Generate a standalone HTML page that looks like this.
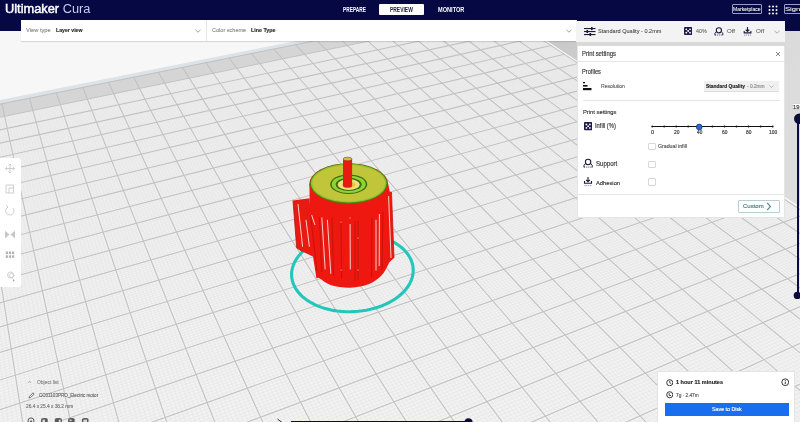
<!DOCTYPE html>
<html><head><meta charset="utf-8">
<style>
*{margin:0;padding:0;box-sizing:border-box}
html,body{width:800px;height:422px;overflow:hidden;background:#f7f7f7;font-family:"Liberation Sans",sans-serif}
#scene{position:absolute;left:0;top:0;filter:blur(0.35px)}
.a{position:absolute;white-space:nowrap}
.t{position:absolute;white-space:nowrap;line-height:1;transform-origin:0 0;font-family:"Liberation Sans",sans-serif;-webkit-text-stroke:0.15px currentColor}
#logo{position:absolute;white-space:nowrap;line-height:1;transform-origin:0 0;left:5.4px;top:2.9px;font-size:12.5px;color:#fff;transform:scaleX(1.025)}
#hdr{position:absolute;left:0;top:0;width:800px;height:30.8px;background:#060843}
#logo b{font-weight:normal;-webkit-text-stroke:0.45px #fff}
#logo span{color:#c9cbf0;font-weight:normal}
.tab{top:5px;font-size:6px;color:#fff;letter-spacing:0.1px}
#pv{left:379px;top:3.5px;width:45px;height:11.5px;background:#fff;border-radius:1px}
#stage{left:21px;top:20px;width:556px;height:21px;background:#fff;box-shadow:0 1px 1px rgba(0,0,0,0.12)}
.lbl{font-size:6.5px;color:#9a9a9a}
.val{font-size:6.5px;color:#303030}
#psbar{left:576px;top:20.5px;width:208.5px;height:21px;background:#f3f3f3}
#panel{left:577px;top:45.5px;width:207.5px;height:172.5px;background:#fff;border:1px solid #e4e4e4;border-top:none}
#pshadow{left:577px;top:41.5px;width:208px;height:4px;background:#d9d9d9}
.pt{font-size:6.7px;color:#303030}
.sm{font-size:5.7px;color:#505050}
.cb{width:7.5px;height:7.5px;border:1px solid #d8d8d8;background:#fff;border-radius:1px}
#toolbar{left:0;top:158px;width:21px;height:129.3px;background:#fff;border-radius:0 3px 3px 0}
#info{left:656.8px;top:370.7px;width:138.5px;height:52px;background:#fff;border:1px solid #e4e4e4;border-bottom:none}
#save{left:665px;top:402.8px;width:124px;height:13.2px;background:#196ef0;color:#fff;font-size:6.3px;text-align:center;line-height:13.2px}
</style></head><body>
<svg id="scene" width="800" height="422" viewBox="0 0 800 422">
<rect width="800" height="422" fill="#f7f7f7"/>
<polygon points="-84.4,134.7 502.4,13.5 1157.7,445.1 -42.5,1245.6" fill="#f2f2f2"/>
<defs><linearGradient id="rg" gradientUnits="userSpaceOnUse" x1="555" y1="45" x2="795" y2="90"><stop offset="0" stop-color="#c9c9c9"/><stop offset="1" stop-color="#dcdcdc"/></linearGradient></defs>
<polygon points="488.6,2.6 757.8,-51.1 1480.6,229.7 1160.6,443.1" fill="url(#rg)"/>
<polygon points="-84.9,121.2 490.3,5.5 502.4,13.5 -84.4,134.7" fill="#d5d5d5"/>
<polygon points="-85.0,117.0 757.8,-51.1 762.5,-49.3 -84.9,121.2" fill="#dde2e6"/>
<path d="M-81.3 134.1L-33.0 1239.3M-78.2 133.5L-23.6 1233.0M-75.2 132.8L-14.4 1226.8M-72.1 132.2L-5.1 1220.7M-69.1 131.6L4.0 1214.6M-66.0 130.9L13.1 1208.5M-63.0 130.3L22.1 1202.5M-60.0 129.7L31.1 1196.5M-57.0 129.1L40.0 1190.6M-51.0 127.8L57.5 1178.9M-48.0 127.2L66.2 1173.1M-45.0 126.6L74.8 1167.4M-42.0 126.0L83.4 1161.7M-39.1 125.4L91.9 1156.0M-36.1 124.8L100.3 1150.4M-33.1 124.1L108.7 1144.8M-30.2 123.5L117.0 1139.2M-27.3 122.9L125.2 1133.7M-21.4 121.7L141.5 1122.9M-18.5 121.1L149.6 1117.5M-15.6 120.5L157.6 1112.1M-12.7 119.9L165.6 1106.8M-9.8 119.3L173.5 1101.6M-6.9 118.7L181.3 1096.3M-4.0 118.1L189.1 1091.1M-1.1 117.5L196.8 1086.0M1.8 116.9L204.5 1080.9M7.5 115.8L219.7 1070.7M10.3 115.2L227.2 1065.7M13.2 114.6L234.7 1060.7M16.0 114.0L242.1 1055.8M18.8 113.4L249.5 1050.9M21.7 112.8L256.8 1046.0M24.5 112.2L264.0 1041.1M27.3 111.7L271.3 1036.3M30.1 111.1L278.4 1031.6M35.7 109.9L292.6 1022.1M38.4 109.4L299.6 1017.4M41.2 108.8L306.6 1012.8M44.0 108.2L313.5 1008.1M46.8 107.6L320.4 1003.5M49.5 107.1L327.3 999.0M52.3 106.5L334.1 994.5M55.0 105.9L340.8 989.9M57.7 105.4L347.5 985.5M63.2 104.2L360.8 976.6M65.9 103.7L367.4 972.2M68.6 103.1L373.9 967.9M71.3 102.6L380.4 963.6M74.0 102.0L386.8 959.2M76.7 101.4L393.2 955.0M79.4 100.9L399.6 950.7M82.1 100.3L405.9 946.5M84.8 99.8L412.2 942.3M90.1 98.7L424.7 934.0M92.7 98.1L430.8 929.9M95.4 97.6L437.0 925.8M98.0 97.0L443.1 921.7M100.7 96.5L449.1 917.7M103.3 96.0L455.1 913.7M105.9 95.4L461.1 909.7M108.5 94.9L467.0 905.7M111.2 94.3L472.9 901.8M116.4 93.3L484.6 894.0M119.0 92.7L490.4 890.1M121.5 92.2L496.2 886.3M124.1 91.6L501.9 882.5M126.7 91.1L507.6 878.7M129.3 90.6L513.3 874.9M131.8 90.1L518.9 871.2M134.4 89.5L524.5 867.4M137.0 89.0L530.1 863.7M142.0 87.9L541.1 856.4M144.6 87.4L546.5 852.7M147.1 86.9L552.0 849.1M149.6 86.4L557.4 845.5M152.2 85.9L562.7 841.9M154.7 85.3L568.0 838.4M157.2 84.8L573.3 834.8M159.7 84.3L578.6 831.3M162.2 83.8L583.9 827.8M167.2 82.8L594.2 820.9M169.6 82.2L599.4 817.5M172.1 81.7L604.5 814.0M174.6 81.2L609.6 810.7M177.0 80.7L614.7 807.3M179.5 80.2L619.7 803.9M181.9 79.7L624.7 800.6M184.4 79.2L629.7 797.3M186.8 78.7L634.6 794.0M191.7 77.7L644.5 787.4M194.1 77.2L649.3 784.2M196.6 76.7L654.2 780.9M199.0 76.2L659.0 777.7M201.4 75.7L663.8 774.5M203.8 75.2L668.5 771.4M206.2 74.7L673.3 768.2M208.6 74.2L678.0 765.1M211.0 73.7L682.6 761.9M215.7 72.7L691.9 755.7M218.1 72.2L696.5 752.7M220.5 71.7L701.1 749.6M222.8 71.3L705.7 746.6M225.2 70.8L710.2 743.6M227.5 70.3L714.7 740.6M229.9 69.8L719.2 737.6M232.2 69.3L723.6 734.6M234.6 68.8L728.1 731.6M239.2 67.9L736.9 725.8M241.5 67.4L741.3 722.8M243.9 66.9L745.6 720.0M246.2 66.4L749.9 717.1M248.5 66.0L754.2 714.2M250.8 65.5L758.5 711.4M253.1 65.0L762.7 708.5M255.4 64.5L767.0 705.7M257.7 64.1L771.2 702.9M262.2 63.1L779.5 697.3M264.5 62.6L783.7 694.6M266.8 62.2L787.8 691.8M269.0 61.7L791.9 689.1M271.3 61.2L796.0 686.4M273.5 60.8L800.0 683.6M275.8 60.3L804.1 680.9M278.0 59.8L808.1 678.3M280.3 59.4L812.1 675.6M284.7 58.5L820.0 670.3M287.0 58.0L824.0 667.7M289.2 57.5L827.9 665.1M291.4 57.1L831.8 662.5M293.6 56.6L835.6 659.9M295.8 56.2L839.5 657.3M298.0 55.7L843.3 654.7M300.2 55.3L847.2 652.2M302.4 54.8L851.0 649.7M306.8 53.9L858.5 644.6M308.9 53.5L862.3 642.1M311.1 53.0L866.0 639.6M313.3 52.6L869.7 637.2M315.5 52.1L873.4 634.7M317.6 51.7L877.1 632.3M319.8 51.2L880.7 629.8M321.9 50.8L884.4 627.4M324.1 50.3L888.0 625.0M328.3 49.4L895.2 620.2M330.5 49.0L898.8 617.8M332.6 48.6L902.3 615.4M334.7 48.1L905.8 613.1M336.9 47.7L909.4 610.7M339.0 47.3L912.9 608.4M341.1 46.8L916.3 606.1M343.2 46.4L919.8 603.7M345.3 45.9L923.3 601.4M349.5 45.1L930.1 596.9M351.6 44.6L933.5 594.6M353.7 44.2L936.9 592.3M355.7 43.8L940.3 590.1M357.8 43.4L943.7 587.8M359.9 42.9L947.0 585.6M362.0 42.5L950.3 583.4M364.0 42.1L953.6 581.2M366.1 41.6L956.9 579.0M370.2 40.8L963.5 574.6M372.2 40.4L966.7 572.5M374.3 40.0L970.0 570.3M376.3 39.5L973.2 568.1M378.4 39.1L976.4 566.0M380.4 38.7L979.6 563.9M382.4 38.3L982.8 561.8M384.4 37.9L985.9 559.6M386.5 37.4L989.1 557.5M390.5 36.6L995.3 553.4M392.5 36.2L998.4 551.3M394.5 35.8L1001.5 549.2M396.5 35.4L1004.6 547.2M398.5 35.0L1007.7 545.1M400.5 34.5L1010.7 543.1M402.5 34.1L1013.8 541.1M404.5 33.7L1016.8 539.0M406.4 33.3L1019.8 537.0M410.4 32.5L1025.8 533.0M412.3 32.1L1028.8 531.1M414.3 31.7L1031.7 529.1M416.3 31.3L1034.7 527.1M418.2 30.9L1037.6 525.2M420.2 30.5L1040.5 523.2M422.1 30.1L1043.5 521.3M424.1 29.7L1046.4 519.3M426.0 29.3L1049.2 517.4M429.9 28.5L1055.0 513.6M431.8 28.1L1057.8 511.7M433.7 27.7L1060.7 509.8M435.6 27.3L1063.5 507.9M437.6 26.9L1066.3 506.0M439.5 26.5L1069.1 504.2M441.4 26.1L1071.9 502.3M443.3 25.7L1074.7 500.5M445.2 25.3L1077.4 498.6M449.0 24.5L1082.9 495.0M450.9 24.1L1085.6 493.1M452.8 23.7L1088.4 491.3M454.7 23.3L1091.1 489.5M456.5 23.0L1093.8 487.7M458.4 22.6L1096.4 485.9M460.3 22.2L1099.1 484.1M462.2 21.8L1101.8 482.4M464.0 21.4L1104.4 480.6M467.7 20.6L1109.7 477.1M469.6 20.3L1112.3 475.3M471.4 19.9L1114.9 473.6M473.3 19.5L1117.5 471.9M475.1 19.1L1120.1 470.1M477.0 18.7L1122.7 468.4M478.8 18.4L1125.3 466.7M480.6 18.0L1127.8 465.0M482.5 17.6L1130.4 463.3M486.1 16.8L1135.4 459.9M487.9 16.5L1137.9 458.3M489.8 16.1L1140.4 456.6M491.6 15.7L1142.9 454.9M493.4 15.3L1145.4 453.3M495.2 15.0L1147.9 451.6M497.0 14.6L1150.4 450.0M498.8 14.2L1152.8 448.3M500.6 13.9L1155.3 446.7M-84.3 136.0L503.5 14.2M-84.3 137.3L504.6 15.0M-84.2 138.6L505.8 15.7M-84.2 139.8L506.9 16.5M-84.1 141.1L508.1 17.2M-84.1 142.4L509.2 18.0M-84.0 143.7L510.4 18.7M-84.0 145.1L511.5 19.5M-83.9 146.4L512.7 20.3M-83.8 149.0L515.0 21.8M-83.8 150.4L516.2 22.6M-83.7 151.7L517.4 23.3M-83.7 153.1L518.5 24.1M-83.6 154.4L519.7 24.9M-83.6 155.8L520.9 25.7M-83.5 157.2L522.1 26.5M-83.5 158.6L523.3 27.3M-83.4 160.0L524.5 28.1M-83.3 162.7L527.0 29.7M-83.3 164.2L528.2 30.5M-83.2 165.6L529.4 31.3M-83.1 167.0L530.6 32.1M-83.1 168.4L531.9 32.9M-83.0 169.9L533.1 33.7M-83.0 171.3L534.3 34.5M-82.9 172.8L535.6 35.4M-82.9 174.2L536.9 36.2M-82.8 177.2L539.4 37.8M-82.7 178.7L540.6 38.7M-82.7 180.2L541.9 39.5M-82.6 181.7L543.2 40.4M-82.5 183.2L544.5 41.2M-82.5 184.7L545.8 42.1M-82.4 186.2L547.1 42.9M-82.4 187.7L548.4 43.8M-82.3 189.3L549.7 44.6M-82.2 192.4L552.3 46.4M-82.1 194.0L553.6 47.2M-82.1 195.5L554.9 48.1M-82.0 197.1L556.3 49.0M-82.0 198.7L557.6 49.9M-81.9 200.3L558.9 50.7M-81.8 201.9L560.3 51.6M-81.8 203.5L561.6 52.5M-81.7 205.2L563.0 53.4M-81.6 208.4L565.7 55.2M-81.5 210.1L567.1 56.1M-81.5 211.8L568.5 57.0M-81.4 213.4L569.9 57.9M-81.3 215.1L571.3 58.9M-81.3 216.8L572.7 59.8M-81.2 218.5L574.1 60.7M-81.1 220.2L575.5 61.6M-81.1 221.9L576.9 62.6M-80.9 225.4L579.7 64.4M-80.9 227.2L581.2 65.4M-80.8 228.9L582.6 66.3M-80.7 230.7L584.1 67.3M-80.7 232.5L585.5 68.2M-80.6 234.3L587.0 69.2M-80.5 236.1L588.4 70.2M-80.5 237.9L589.9 71.1M-80.4 239.7L591.4 72.1M-80.3 243.4L594.4 74.1M-80.2 245.2L595.8 75.0M-80.1 247.1L597.4 76.0M-80.1 249.0L598.9 77.0M-80.0 250.9L600.4 78.0M-79.9 252.8L601.9 79.0M-79.8 254.7L603.4 80.0M-79.8 256.6L605.0 81.0M-79.7 258.5L606.5 82.1M-79.5 262.4L609.6 84.1M-79.5 264.4L611.2 85.1M-79.4 266.4L612.7 86.2M-79.3 268.4L614.3 87.2M-79.2 270.4L615.9 88.2M-79.2 272.4L617.5 89.3M-79.1 274.4L619.1 90.3M-79.0 276.5L620.7 91.4M-78.9 278.5L622.3 92.4M-78.8 282.7L625.5 94.6M-78.7 284.8L627.2 95.7M-78.6 286.9L628.8 96.7M-78.5 289.0L630.4 97.8M-78.5 291.1L632.1 98.9M-78.4 293.3L633.8 100.0M-78.3 295.4L635.4 101.1M-78.2 297.6L637.1 102.2M-78.1 299.8L638.8 103.3M-78.0 304.2L642.2 105.6M-77.9 306.5L643.9 106.7M-77.8 308.7L645.6 107.8M-77.7 311.0L647.3 108.9M-77.6 313.2L649.1 110.1M-77.5 315.5L650.8 111.2M-77.5 317.8L652.5 112.4M-77.4 320.2L654.3 113.5M-77.3 322.5L656.1 114.7M-77.1 327.2L659.6 117.0M-77.0 329.6L661.4 118.2M-76.9 332.0L663.2 119.4M-76.8 334.4L665.0 120.6M-76.7 336.8L666.8 121.8M-76.6 339.3L668.6 123.0M-76.6 341.8L670.5 124.2M-76.5 344.2L672.3 125.4M-76.4 346.7L674.2 126.6M-76.2 351.8L677.9 129.1M-76.1 354.3L679.7 130.3M-76.0 356.9L681.6 131.5M-75.9 359.5L683.5 132.8M-75.8 362.1L685.4 134.0M-75.7 364.7L687.3 135.3M-75.6 367.4L689.3 136.6M-75.5 370.0L691.2 137.8M-75.4 372.7L693.1 139.1M-75.2 378.1L697.0 141.7M-75.1 380.8L699.0 143.0M-75.0 383.6L701.0 144.3M-74.9 386.4L703.0 145.6M-74.8 389.2L705.0 146.9M-74.7 392.0L707.0 148.2M-74.6 394.8L709.0 149.6M-74.4 397.7L711.0 150.9M-74.3 400.6L713.0 152.2M-74.1 406.4L717.2 154.9M-74.0 409.3L719.2 156.3M-73.9 412.3L721.3 157.7M-73.8 415.3L723.4 159.0M-73.7 418.3L725.5 160.4M-73.6 421.3L727.6 161.8M-73.4 424.4L729.7 163.2M-73.3 427.4L731.9 164.6M-73.2 430.6L734.0 166.0M-73.0 436.8L738.3 168.9M-72.8 440.0L740.5 170.3M-72.7 443.2L742.7 171.7M-72.6 446.4L744.9 173.2M-72.5 449.7L747.1 174.6M-72.4 452.9L749.3 176.1M-72.2 456.2L751.5 177.6M-72.1 459.6L753.8 179.1M-72.0 462.9L756.0 180.5M-71.7 469.7L760.6 183.5M-71.6 473.1L762.9 185.0M-71.5 476.6L765.2 186.6M-71.3 480.1L767.5 188.1M-71.2 483.6L769.8 189.6M-71.1 487.1L772.2 191.2M-70.9 490.7L774.5 192.7M-70.8 494.3L776.9 194.3M-70.7 498.0L779.3 195.8M-70.4 505.3L784.1 199.0M-70.2 509.0L786.5 200.6M-70.1 512.8L788.9 202.2M-70.0 516.6L791.4 203.8M-69.8 520.4L793.8 205.4M-69.7 524.3L796.3 207.1M-69.5 528.2L798.8 208.7M-69.4 532.1L801.3 210.3M-69.2 536.0L803.8 212.0M-68.9 544.0L808.9 215.3M-68.8 548.1L811.4 217.0M-68.6 552.2L814.0 218.7M-68.5 556.3L816.6 220.4M-68.3 560.5L819.2 222.1M-68.1 564.7L821.8 223.9M-68.0 568.9L824.4 225.6M-67.8 573.2L827.1 227.3M-67.7 577.5L829.7 229.1M-67.3 586.3L835.1 232.6M-67.2 590.7L837.8 234.4M-67.0 595.2L840.5 236.2M-66.8 599.7L843.3 238.0M-66.7 604.2L846.0 239.8M-66.5 608.8L848.8 241.6M-66.3 613.5L851.6 243.5M-66.1 618.2L854.4 245.3M-65.9 622.9L857.2 247.2M-65.6 632.5L862.9 250.9M-65.4 637.4L865.8 252.8M-65.2 642.3L868.6 254.7M-65.0 647.2L871.5 256.6M-64.8 652.3L874.5 258.5M-64.7 657.3L877.4 260.5M-64.5 662.4L880.4 262.4M-64.3 667.6L883.3 264.4M-64.1 672.8L886.3 266.3M-63.7 683.4L892.4 270.3M-63.5 688.7L895.4 272.3M-63.3 694.1L898.5 274.3M-63.1 699.6L901.5 276.4M-62.8 705.2L904.7 278.4M-62.6 710.7L907.8 280.5M-62.4 716.4L910.9 282.5M-62.2 722.1L914.1 284.6M-62.0 727.9L917.3 286.7M-61.5 739.6L923.7 290.9M-61.3 745.5L926.9 293.1M-61.1 751.5L930.2 295.2M-60.9 757.6L933.5 297.4M-60.6 763.7L936.8 299.6M-60.4 770.0L940.1 301.8M-60.2 776.2L943.4 304.0M-59.9 782.6L946.8 306.2M-59.7 789.0L950.2 308.4M-59.2 802.0L957.0 312.9M-58.9 808.6L960.5 315.2M-58.7 815.3L964.0 317.5M-58.4 822.1L967.5 319.8M-58.2 829.0L971.0 322.1M-57.9 835.9L974.5 324.4M-57.6 842.9L978.1 326.8M-57.4 850.0L981.7 329.2M-57.1 857.2L985.3 331.5M-56.6 871.8L992.6 336.4M-56.3 879.2L996.3 338.8M-56.0 886.8L1000.0 341.2M-55.7 894.4L1003.8 343.7M-55.4 902.1L1007.5 346.2M-55.1 909.9L1011.3 348.7M-54.8 917.8L1015.2 351.2M-54.5 925.7L1019.0 353.7M-54.2 933.8L1022.9 356.3M-53.6 950.3L1030.7 361.4M-53.3 958.7L1034.6 364.0M-53.0 967.2L1038.6 366.6M-52.6 975.8L1042.6 369.3M-52.3 984.5L1046.7 371.9M-52.0 993.3L1050.7 374.6M-51.6 1002.3L1054.8 377.3M-51.3 1011.3L1059.0 380.0M-50.9 1020.5L1063.1 382.8M-50.2 1039.2L1071.5 388.3M-49.9 1048.8L1075.7 391.1M-49.5 1058.5L1080.0 393.9M-49.1 1068.3L1084.3 396.7M-48.8 1078.2L1088.7 399.6M-48.4 1088.3L1093.0 402.5M-48.0 1098.5L1097.4 405.4M-47.6 1108.9L1101.9 408.3M-47.2 1119.4L1106.3 411.2M-46.4 1140.9L1115.3 417.2M-46.0 1151.8L1119.9 420.2M-45.6 1163.0L1124.5 423.2M-45.1 1174.3L1129.1 426.3M-44.7 1185.7L1133.8 429.3M-44.3 1197.3L1138.5 432.4M-43.8 1209.1L1143.3 435.6M-43.4 1221.1L1148.0 438.7M-42.9 1233.2L1152.9 441.9" stroke="#e4e4e4" stroke-width="0.6" fill="none"/>
<path d="M-84.9 121.2L-42.5 1245.6M-55.3 115.2L48.8 1184.7M-26.3 109.4L133.4 1128.3M1.9 103.7L212.1 1075.8M29.5 98.2L285.5 1026.8M56.4 92.8L354.2 981.0M82.8 87.5L418.5 938.2M108.5 82.3L478.8 897.9M133.7 77.2L535.6 860.0M158.4 72.2L589.1 824.4M182.5 67.4L639.6 790.7M206.0 62.7L687.3 758.8M229.1 58.0L732.5 728.7M251.7 53.5L775.4 700.1M273.9 49.0L816.1 673.0M295.6 44.7L854.8 647.1M316.8 40.4L891.6 622.6M337.6 36.2L926.7 599.1M358.0 32.1L960.2 576.8M378.0 28.1L992.2 555.5M397.7 24.1L1022.8 535.0M416.9 20.3L1052.1 515.5M435.8 16.5L1080.2 496.8M454.3 12.7L1107.1 478.8M472.4 9.1L1132.9 461.6M490.3 5.5L1157.7 445.1M-84.4 134.7L502.4 13.5M-83.9 147.7L513.8 21.0M-83.4 161.3L525.7 28.9M-82.8 175.7L538.1 37.0M-82.2 190.8L551.0 45.5M-81.6 206.8L564.4 54.3M-81.0 223.7L578.3 63.5M-80.3 241.5L592.9 73.1M-79.6 260.5L608.0 83.1M-78.9 280.6L623.9 93.5M-78.1 302.0L640.5 104.4M-77.2 324.8L657.8 115.9M-76.3 349.3L676.0 127.8M-75.3 375.4L695.1 140.4M-74.2 403.5L715.1 153.6M-73.1 433.7L736.1 167.4M-71.9 466.3L758.3 182.0M-70.5 501.6L781.7 197.4M-69.1 540.0L806.3 213.7M-67.5 581.9L832.4 230.8M-65.8 627.7L860.0 249.0M-63.9 678.0L889.3 268.3M-61.8 733.7L920.5 288.8M-59.4 795.5L953.6 310.7M-56.8 864.5L989.0 333.9M-53.9 942.0L1026.8 358.8M-50.6 1029.8L1067.3 385.5M-46.8 1130.1L1110.8 414.2M-42.5 1245.6L1157.7 445.1" stroke="#c2c2c2" stroke-width="1.1" fill="none"/>
<path d="M-84.9 121.2L762.5 -49.3" stroke="#b9c0c6" stroke-width="1" fill="none"/>
<g id="obj">
<!-- ring -->
<path d="M406.8 252.9 L408.4 255.1 L409.8 257.4 L411.0 259.7 L411.9 262.2 L412.6 264.6 L413.0 267.2 L413.2 269.7 L413.2 272.3 L412.8 274.9 L412.2 277.4 L411.4 280.0 L410.2 282.6 L408.9 285.1 L407.2 287.5 L405.3 289.9 L403.2 292.3 L400.8 294.5 L398.2 296.7 L395.4 298.7 L392.3 300.7 L389.1 302.5 L385.7 304.1 L382.1 305.7 L378.4 307.0 L374.5 308.2 L370.5 309.3 L366.5 310.2 L362.4 310.8 L358.2 311.3 L353.9 311.6 L349.7 311.8 L345.5 311.7 L341.3 311.4 L337.2 311.0 L333.2 310.4 L329.2 309.5 L325.4 308.6 L321.7 307.4 L318.1 306.1 L314.8 304.6 L311.6 303.0 L308.6 301.2 L305.8 299.3 L303.2 297.3 L300.9 295.1 L298.9 292.9 L297.0 290.6 L295.5 288.2 L294.2 285.8 L293.1 283.3 L292.4 280.7 L291.8 278.1 L291.6 275.6 L291.6 273.0 L291.9 270.4 L292.5 267.8 L293.3 265.3 L294.3 262.8 L295.6 260.4 L297.1 258.0 L298.8 255.7 L300.8 253.5 L302.9 251.3 L305.3 249.2 L307.8 247.3 L310.5 245.4 L313.3 243.7 L316.3 242.1 L319.4 240.5 L322.7 239.2 L326.0 237.9 L329.5 236.8 L333.0 235.8 L336.6 235.0 L340.3 234.3 L344.0 233.8 L347.7 233.4 L351.5 233.2 L355.2 233.1 L358.9 233.1 L362.7 233.3 L366.3 233.7 L370.0 234.2 L373.5 234.8 L377.0 235.6 L380.4 236.6 L383.7 237.6 L386.9 238.8 L389.9 240.2 L392.8 241.6 L395.6 243.2 L398.2 245.0 L400.6 246.8 L402.9 248.7 L404.9 250.7 L406.8 252.9Z" fill="none" stroke="#24c6bc" stroke-width="3.1"/>
<!-- left fin block -->
<path d="M293 200.6 L309.6 198.2 L313 256.5 L302.2 251.6 L296.7 247.8 Z" fill="#e81a12"/>
<path d="M293 200.6 L296.7 247.8 L302.2 251.6" stroke="#b81208" stroke-width="0.8" fill="none"/>
<!-- right fin -->
<path d="M385 191 L391.5 192 L394 258 L388.4 263 L385 262 Z" fill="#ea1a12"/><path d="M391.5 192 L394 258" stroke="#b81208" stroke-width="0.7"/>
<!-- main body -->
<path d="M309.4 184 L310.5 250 L313 256.5 L316.4 278.3 L318.8 277.7 C321.1 279.1 326.1 283.5 331.4 285.2 C336.6 286.9 344.0 287.9 350.3 287.7 C356.6 287.5 363.9 286.1 369.1 284.0 C374.3 281.9 378.6 278.3 381.7 275.2 C384.8 272.1 386.1 268.9 388.0 265.1 C389.9 261.3 392.1 255.8 393.0 252.6 L390.7 196.5 L388.2 184 Z" fill="#ef1810"/>
<!-- grooves -->
<g stroke="#b8120a" stroke-width="0.9" fill="none" opacity="0.85">
<path d="M310.6 215 L317 271"/><path d="M319.5 217 L321.8 272"/><path d="M332 218 L333.5 276"/>
<path d="M341 220 L341.6 279"/><path d="M355 221 L355 281"/><path d="M358 221 L358 280"/>
<path d="M372 218 L371.5 277"/><path d="M383 212 L382 270"/>
</g>
<!-- top -->
<ellipse cx="348.7" cy="183.8" rx="39.4" ry="20.6" fill="#cf2a12"/>
<ellipse cx="348.7" cy="183.5" rx="38.6" ry="19.9" fill="#4a8418"/>
<ellipse cx="348.7" cy="183.3" rx="37.8" ry="19.2" fill="#86c82a"/>
<ellipse cx="348.7" cy="183.2" rx="36.3" ry="18.2" fill="#c1c53a"/>
<ellipse cx="348.7" cy="184.2" rx="18.5" ry="9.75" fill="#3d6a14"/>
<ellipse cx="348.7" cy="184.3" rx="17" ry="8.8" fill="#8fd430"/>
<ellipse cx="348.7" cy="184.4" rx="13" ry="6.6" fill="#3d6a14"/>
<ellipse cx="348.7" cy="184.5" rx="11" ry="5.4" fill="#f2e27a"/>
<ellipse cx="348.7" cy="184.6" rx="7" ry="3.4" fill="#e8c44a"/>
<!-- shaft -->
<path d="M343 159 L343 185.5 A4.55 2.2 0 0 0 352.1 185.5 L352.1 159 Z" fill="#e81b10"/>
<ellipse cx="347.55" cy="159" rx="4.55" ry="1.8" fill="#c9c04a" stroke="#a01008" stroke-width="0.5"/>
<!-- stripes -->
<g stroke="#fbe3de" stroke-width="0.9" fill="none">
<path d="M298 204 L302.6 246.8"/><path d="M306 219.8 L309.4 246.8"/><path d="M311.6 215 L315 225"/>
<path d="M321.8 217.5 L325.2 269.3"/><path d="M327.4 219.8 L330.8 273.8"/>
<path d="M350.1 224 L350.3 269.3"/>
<path d="M376 219.8 L376 270.5"/><path d="M379.4 214 L379.2 266"/><path d="M388.6 196 L391 258"/>
</g>
<g fill="#fbe3de"><circle cx="341" cy="222" r="0.6"/><circle cx="341.2" cy="270" r="0.6"/><circle cx="358" cy="238" r="0.6"/><circle cx="358" cy="270" r="0.6"/><circle cx="350" cy="218" r="0.6"/></g>
</g>

</svg>
<div id="hdr"></div>
<div class="a" id="pv"></div>
<div id="logo"><b>Ultimaker</b> <span>Cura</span></div>
<div class="a" style="left:731.5px;top:3.8px;width:30.5px;height:10.7px;border:1px solid #9a9cc8;border-radius:1px;"></div>
<svg class="a" style="left:768px;top:4.5px" width="10" height="10" viewBox="0 0 10 10"><g fill="#fff"><circle cx="1.5" cy="1.5" r="1"/><circle cx="5" cy="1.5" r="1"/><circle cx="8.5" cy="1.5" r="1"/><circle cx="1.5" cy="5" r="1"/><circle cx="5" cy="5" r="1"/><circle cx="8.5" cy="5" r="1"/><circle cx="1.5" cy="8.5" r="1"/><circle cx="5" cy="8.5" r="1"/><circle cx="8.5" cy="8.5" r="1"/></g></svg>
<div class="a" style="left:783.5px;top:3.8px;width:30px;height:10.7px;border:1px solid #9a9cc8;border-radius:1px;"></div>

<div class="a" id="stage"></div>
<svg class="a" style="left:195px;top:28.5px" width="6" height="4" viewBox="0 0 6 4"><path d="M0.5 0.8L3 3.2L5.5 0.8" stroke="#888" stroke-width="0.8" fill="none"/></svg>
<div class="a" style="left:206px;top:20px;width:1px;height:21px;background:#e6e6e6"></div>
<svg class="a" style="left:566px;top:28.5px" width="6" height="4" viewBox="0 0 6 4"><path d="M0.5 0.8L3 3.2L5.5 0.8" stroke="#888" stroke-width="0.8" fill="none"/></svg>

<div class="a" id="psbar"></div>
<div class="a" id="pshadow"></div>
<div class="a" id="panel"></div>
<div class="a" style="left:577px;top:61px;width:207.5px;height:0.8px;background:#e6e6e6"></div>
<div class="a" style="left:583px;top:99.5px;width:197px;height:1px;background:#e6e6e6"></div>
<div class="a" style="left:577px;top:194px;width:207.5px;height:1px;background:#e6e6e6"></div>
<div class="a" style="left:704px;top:80.5px;width:75px;height:10.5px;background:#f0f0f0;box-shadow:0 1px 0 #dedede"></div>
<svg class="a" style="left:769px;top:84.5px" width="5" height="3" viewBox="0 0 5 3"><path d="M0.5 0.5L2.5 2.5L4.5 0.5" stroke="#999" stroke-width="0.7" fill="none"/></svg>
<div class="a" style="left:738.2px;top:199.8px;width:41.5px;height:13.5px;border:1px solid #b8cfd1;border-radius:1px;"></div>

<div class="a" id="toolbar"></div>
<div class="a" id="info"></div>
<div class="a" id="save"></div>

<!-- print settings header icons -->
<svg class="a" style="left:583.5px;top:26.5px" width="12" height="9" viewBox="0 0 12 9"><g fill="#1a1a3a"><rect x="0" y="1" width="11.5" height="1.1"/><rect x="0" y="4" width="11.5" height="1.1"/><rect x="0" y="7" width="11.5" height="1.1"/><rect x="7" y="0" width="1.6" height="3.1"/><rect x="2.5" y="3" width="1.6" height="3.1"/><rect x="5.5" y="6" width="1.6" height="3"/></g></svg>
<svg class="a" style="left:683.5px;top:27px" width="8.3" height="8" viewBox="0 0 8.3 8"><rect width="8.3" height="8" rx="1" fill="#1c1b4a"/><g fill="#fff"><circle cx="2.3" cy="2.3" r="0.9"/><circle cx="6" cy="2.3" r="0.9"/><circle cx="4.15" cy="4" r="0.9"/><circle cx="2.3" cy="5.7" r="0.9"/><circle cx="6" cy="5.7" r="0.9"/></g></svg>
<svg class="a" style="left:714px;top:25.5px" width="11" height="11" viewBox="0 0 11 11"><circle cx="4.9" cy="4.3" r="2.6" fill="none" stroke="#1c1b3a" stroke-width="1.1"/><path d="M2.6 5.6 L1.0 7.2 L1.0 9.3 M7.2 5.6 L8.8 7.2 L8.8 9.3" fill="none" stroke="#1c1b3a" stroke-width="1.0"/><path d="M1.0 9.0 L8.8 9.0" stroke="#1c1b3a" stroke-width="0.8" stroke-dasharray="1 0.9"/></svg>
<svg class="a" style="left:743px;top:25.5px" width="11" height="11" viewBox="0 0 11 11"><path d="M4.5 1.0 L4.5 5.4 M2.7 3.7 L4.5 5.5 L6.3 3.7" fill="none" stroke="#1c1b3a" stroke-width="1.1"/><path d="M1.2 4.9 L1.2 6.9 L7.9 6.9 L7.9 4.9" fill="none" stroke="#1c1b3a" stroke-width="1.1"/><path d="M1.2 9.1 L8 9.1" stroke="#5a5f88" stroke-width="0.8" stroke-dasharray="1 0.9"/></svg>
<svg class="a" style="left:774px;top:29.5px" width="6" height="4" viewBox="0 0 6 4"><path d="M0.5 0.8L3 3.2L5.5 0.8" stroke="#999" stroke-width="0.8" fill="none"/></svg>
<!-- panel -->
<svg class="a" style="left:775px;top:50.5px" width="6" height="6" viewBox="0 0 6 6"><path d="M1 1L5 5M5 1L1 5" stroke="#666" stroke-width="0.8"/></svg>
<svg class="a" style="left:582.5px;top:82px" width="9" height="8.5" viewBox="0 0 9 8.5"><g fill="#111"><rect x="0" y="0" width="2" height="1.3"/><rect x="0" y="3" width="4.5" height="1.6"/><rect x="0" y="6" width="8.5" height="2.2"/></g></svg>
<svg class="a" style="left:584px;top:122.3px" width="8.3" height="8.3" viewBox="0 0 8.3 8.3"><rect width="8.3" height="8.3" rx="1" fill="#1c1b4a"/><g fill="#fff"><circle cx="2.4" cy="2.4" r="0.9"/><circle cx="5.9" cy="2.4" r="0.9"/><circle cx="4.15" cy="4.15" r="0.9"/><circle cx="2.4" cy="5.9" r="0.9"/><circle cx="5.9" cy="5.9" r="0.9"/></g></svg>
<svg class="a" style="left:583px;top:157.5px" width="11" height="11" viewBox="0 0 11 11"><circle cx="5.1" cy="4.0" r="2.7" fill="none" stroke="#1c1b3a" stroke-width="1.1"/><path d="M2.7 5.4 L1.0 7.2 L1.0 9.4 M7.5 5.4 L9.2 7.2 L9.2 9.4" fill="none" stroke="#1c1b3a" stroke-width="1.0"/><path d="M1.0 9.1 L9.2 9.1" stroke="#1c1b3a" stroke-width="0.8" stroke-dasharray="1 0.9"/></svg>
<svg class="a" style="left:583px;top:176px" width="11" height="11" viewBox="0 0 11 11"><path d="M5 1.0 L5 5.6 M3.1 3.8 L5 5.7 L6.9 3.8" fill="none" stroke="#1c1b3a" stroke-width="1.1"/><path d="M1.5 5.0 L1.5 7.3 L8.5 7.3 L8.5 5.0" fill="none" stroke="#1c1b3a" stroke-width="1.1"/><path d="M1.5 9.6 L8.5 9.6" stroke="#5a5f88" stroke-width="0.8" stroke-dasharray="1 0.9"/></svg>
<!-- infill slider -->
<div class="a" style="left:651.7px;top:126px;width:121.3px;height:1px;background:#111"></div>
<svg class="a" style="left:650px;top:124px" width="125" height="5" viewBox="0 0 125 5">
<g fill="#111"><circle cx="2.2" cy="2.5" r="0.9"/><circle cx="14.2" cy="2.5" r="0.9"/><circle cx="26.2" cy="2.5" r="0.9"/><circle cx="38.2" cy="2.5" r="0.9"/><circle cx="62.4" cy="2.5" r="0.9"/><circle cx="74.5" cy="2.5" r="0.9"/><circle cx="86.5" cy="2.5" r="0.9"/><circle cx="98.5" cy="2.5" r="0.9"/><circle cx="110.6" cy="2.5" r="0.9"/><circle cx="122.7" cy="2.5" r="0.9"/></g></svg>
<svg class="a" style="left:695px;top:122.5px" width="8.5" height="8" viewBox="0 0 8.5 8"><circle cx="4.2" cy="4" r="2.9" fill="#2d66d0" stroke="#12327a" stroke-width="0.7"/></svg>
<div class="a cb" style="left:648.3px;top:142.5px"></div>
<div class="a cb" style="left:648.2px;top:160.5px"></div>
<div class="a cb" style="left:648.2px;top:178.3px"></div>
<svg class="a" style="left:766px;top:202px" width="6" height="9" viewBox="0 0 6 9"><path d="M1.2 1L4.5 4.5L1.2 8" stroke="#5a8c93" stroke-width="1.1" fill="none"/></svg>
<!-- layer slider right -->
<div class="a" style="left:796.6px;top:117px;width:2.4px;height:178.5px;background:#0c0c3c"></div>
<svg class="a" style="left:792px;top:111.5px" width="10" height="13" viewBox="0 0 10 13"><circle cx="7.3" cy="6.8" r="5.3" fill="#0c0c3c"/></svg>
<svg class="a" style="left:792px;top:291px" width="10" height="9" viewBox="0 0 10 9"><circle cx="5.3" cy="4.4" r="3.6" fill="#0c0c3c"/></svg>
<!-- bottom slider -->
<div class="a" style="left:290.5px;top:420.8px;width:178px;height:2px;background:#0c0c3c"></div>
<svg class="a" style="left:463.5px;top:417.8px" width="9" height="9" viewBox="0 0 9 9"><circle cx="4.5" cy="4.5" r="4.2" fill="#0c0c3c"/></svg>
<svg class="a" style="left:276px;top:417.5px" width="8" height="6" viewBox="0 0 8 6"><path d="M1.5 1L6 4.5L1.5 8" fill="none" stroke="#2a2a4a" stroke-width="1"/></svg>
<!-- toolbar icons -->
<svg class="a" style="left:0;top:158px" width="21" height="130" viewBox="0 0 21 130">
<g stroke="#c4c4c4" stroke-width="0.8" fill="none">
<path d="M10 6L10 15M5.5 10.5L14.5 10.5M8.5 7.5L10 6L11.5 7.5M8.5 13.5L10 15L11.5 13.5M7 9L5.5 10.5L7 12M13 9L14.5 10.5L13 12"/>
<path d="M6 27L6 35L13.5 35L13.5 27Z M9 30L13.5 30 M9 30L9 35"/>
<path d="M13 50A4.2 4.2 0 1 1 8 49 M6 47L8 49L6 51"/>
<path d="M11.5 114.8 L14.2 117.5 L11.5 120.2 L8.8 117.5 Z"/>
<circle cx="10.5" cy="117" r="3"/>
</g>
<g fill="#c8c8c8"><path d="M5 72.8L9.6 76.6L5 80.4Z M15 72.8L10.4 76.6L15 80.4Z"/></g>
<g fill="#b4b4b4"><rect x="5.8" y="93.5" width="2.2" height="2.6"/><rect x="8.9" y="93.5" width="2.2" height="2.6"/><rect x="12" y="93.5" width="2.2" height="2.6"/><rect x="5.8" y="97.3" width="2.2" height="2.6"/><rect x="8.9" y="97.3" width="2.2" height="2.6"/><rect x="12" y="97.3" width="2.2" height="2.6"/></g>
<path d="M12.6 120.6 L15 123 L13 123.5Z" fill="#b0b0b0"/>
</svg>
<!-- object list -->
<svg class="a" style="left:27px;top:380px" width="5" height="4" viewBox="0 0 5 4"><path d="M0.8 3L2.5 1.2L4.2 3" stroke="#999" stroke-width="0.7" fill="none"/></svg>
<svg class="a" style="left:27.5px;top:392px" width="7" height="7" viewBox="0 0 7 7"><path d="M1 6L1.5 4.3L5 0.8L6.2 2L2.7 5.5Z" fill="none" stroke="#555" stroke-width="0.8"/></svg>
<svg class="a" style="left:27px;top:416.5px" width="64" height="6" viewBox="0 0 64 6"><g fill="none" stroke="#555" stroke-width="1"><path d="M1.2 6L1.2 3Q1.2 1 4 1Q6.8 1 6.8 3L6.8 6"/><path d="M2.5 6L4 3.5L5.5 6"/></g><g fill="#5a5a5a"><path d="M14 6L14 2.6Q14 0.9 16.5 0.9L18.5 0.9Q20.7 0.9 20.7 2.6L20.7 6Z"/><path d="M27.8 6L27.8 2.6Q27.8 0.9 30.3 0.9L32.5 0.9Q34.9 0.9 34.9 2.6L34.9 6Z"/><path d="M41.1 6L41.1 2.6Q41.1 0.9 43.6 0.9L45.5 0.9Q47.7 0.9 47.7 2.6L47.7 6Z"/><path d="M54.9 6L54.9 2.6Q54.9 0.9 57.4 0.9L59.3 0.9Q61.5 0.9 61.5 2.6L61.5 6Z"/></g><g fill="#d8d8d8"><rect x="15.5" y="2.6" width="2.5" height="3.4"/><rect x="31.8" y="2.6" width="1.8" height="3.4"/><rect x="42.6" y="2.6" width="2" height="1.5"/><rect x="56.4" y="2.6" width="3.6" height="3.4"/></g></svg>
<!-- info panel icons -->
<svg class="a" style="left:665.5px;top:378.8px" width="7.5" height="7.5" viewBox="0 0 7.5 7.5"><circle cx="3.75" cy="3.75" r="3.05" fill="none" stroke="#222" stroke-width="0.9"/><path d="M3.75 1.8L3.75 3.9L5.2 4.6" fill="none" stroke="#222" stroke-width="0.8"/></svg>
<svg class="a" style="left:665.5px;top:391px" width="7.5" height="7.5" viewBox="0 0 7.5 7.5"><circle cx="3.75" cy="3.75" r="3.05" fill="none" stroke="#222" stroke-width="0.9"/><path d="M3.2 2L3.2 4.5L5 4.5" fill="none" stroke="#222" stroke-width="0.8"/></svg>
<svg class="a" style="left:780.5px;top:378.3px" width="8.5" height="8.5" viewBox="0 0 8.5 8.5"><circle cx="4.25" cy="4.25" r="3.4" fill="none" stroke="#222" stroke-width="0.9"/><path d="M4.25 3.6L4.25 6.2" stroke="#222" stroke-width="0.9"/><circle cx="4.25" cy="2.5" r="0.5" fill="#222"/></svg>
<div class="a" style="left:792px;top:103.2px;width:10px;height:6.8px;background:#fff;border:0.6px solid #d8d8d8"></div>

<div class="t" style="left:343.08px;top:6.69px;font-size:6.40px;font-weight:bold;color:#ffffff;transform:scaleX(0.756);-webkit-text-stroke:0px">PREPARE</div>
<div class="t" style="left:390.37px;top:6.69px;font-size:6.40px;font-weight:bold;color:#1a1a40;transform:scaleX(0.774);-webkit-text-stroke:0px">PREVIEW</div>
<div class="t" style="left:437.52px;top:6.69px;font-size:6.40px;font-weight:bold;color:#ffffff;transform:scaleX(0.878);-webkit-text-stroke:0px">MONITOR</div>
<div class="t" style="left:732.78px;top:6.68px;font-size:5.81px;font-weight:normal;color:#ffffff;transform:scaleX(0.873);-webkit-text-stroke:0.05px currentColor">Marketplace</div>
<div class="t" style="left:784.95px;top:6.68px;font-size:5.81px;font-weight:normal;color:#ffffff;transform:scaleX(1.325);-webkit-text-stroke:0.05px currentColor">Sign in</div>
<div class="t" style="left:26.37px;top:28.46px;font-size:5.96px;font-weight:normal;color:#8f8f8f;transform:scaleX(0.963);">View type</div>
<div class="t" style="left:56.25px;top:28.46px;font-size:5.96px;font-weight:bold;color:#2a2a2a;transform:scaleX(0.871);">Layer view</div>
<div class="t" style="left:211.72px;top:28.46px;font-size:5.96px;font-weight:normal;color:#8f8f8f;transform:scaleX(0.931);">Color scheme</div>
<div class="t" style="left:251.34px;top:28.46px;font-size:5.96px;font-weight:bold;color:#2a2a2a;transform:scaleX(0.897);">Line Type</div>
<div class="t" style="left:598.34px;top:28.68px;font-size:5.81px;font-weight:normal;color:#3a3a3a;transform:scaleX(0.960);-webkit-text-stroke:0.05px currentColor">Standard Quality - 0.2mm</div>
<div class="t" style="left:695.58px;top:28.60px;font-size:5.67px;font-weight:normal;color:#555555;transform:scaleX(0.944);-webkit-text-stroke:0.05px currentColor">40%</div>
<div class="t" style="left:726.81px;top:28.60px;font-size:5.67px;font-weight:normal;color:#555555;transform:scaleX(1.083);-webkit-text-stroke:0.05px currentColor">Off</div>
<div class="t" style="left:755.61px;top:28.60px;font-size:5.67px;font-weight:normal;color:#555555;transform:scaleX(1.097);-webkit-text-stroke:0.05px currentColor">Off</div>
<div class="t" style="left:582.22px;top:51.09px;font-size:6.40px;font-weight:normal;color:#333333;transform:scaleX(0.917);">Print settings</div>
<div class="t" style="left:582.44px;top:68.64px;font-size:6.69px;font-weight:normal;color:#333333;transform:scaleX(0.846);">Profiles</div>
<div class="t" style="left:601.48px;top:84.17px;font-size:5.23px;font-weight:normal;color:#666666;transform:scaleX(0.968);">Resolution</div>
<div class="t" style="left:705.66px;top:84.15px;font-size:5.38px;font-weight:bold;color:#222222;transform:scaleX(0.906);">Standard Quality</div>
<div class="t" style="left:746.59px;top:84.15px;font-size:5.38px;font-weight:normal;color:#888888;transform:scaleX(0.889);">- 0.2mm</div>
<div class="t" style="left:582.52px;top:109.41px;font-size:6.25px;font-weight:normal;color:#333333;transform:scaleX(0.927);">Print settings</div>
<div class="t" style="left:595.37px;top:123.34px;font-size:6.69px;font-weight:normal;color:#333333;transform:scaleX(0.861);">Infill (%)</div>
<div class="t" style="left:650.99px;top:131.26px;font-size:4.65px;font-weight:normal;color:#333333;transform:scaleX(1.169);">0</div>
<div class="t" style="left:673.86px;top:131.26px;font-size:4.65px;font-weight:normal;color:#333333;transform:scaleX(1.051);">20</div>
<div class="t" style="left:697.49px;top:131.26px;font-size:4.65px;font-weight:normal;color:#333333;transform:scaleX(1.024);">40</div>
<div class="t" style="left:721.75px;top:131.26px;font-size:4.65px;font-weight:normal;color:#333333;transform:scaleX(1.052);">60</div>
<div class="t" style="left:745.79px;top:131.26px;font-size:4.65px;font-weight:normal;color:#333333;transform:scaleX(1.044);">80</div>
<div class="t" style="left:768.53px;top:131.26px;font-size:4.65px;font-weight:normal;color:#333333;transform:scaleX(1.052);">100</div>
<div class="t" style="left:657.94px;top:144.07px;font-size:5.23px;font-weight:normal;color:#555555;transform:scaleX(1.001);">Gradual infill</div>
<div class="t" style="left:595.62px;top:160.64px;font-size:6.69px;font-weight:normal;color:#333333;transform:scaleX(0.906);">Support</div>
<div class="t" style="left:595.89px;top:179.53px;font-size:6.10px;font-weight:normal;color:#333333;transform:scaleX(0.946);">Adhesion</div>
<div class="t" style="left:743.44px;top:204.49px;font-size:5.45px;font-weight:normal;color:#4a7a80;transform:scaleX(1.103);">Custom</div>
<div class="t" style="left:676.15px;top:380.18px;font-size:5.81px;font-weight:bold;color:#222222;transform:scaleX(0.954);">1 hour 11 minutes</div>
<div class="t" style="left:676.26px;top:392.79px;font-size:5.09px;font-weight:normal;color:#555555;transform:scaleX(0.936);">7g · 2.47m</div>
<div class="t" style="left:711.76px;top:407.49px;font-size:5.45px;font-weight:normal;color:#ffffff;transform:scaleX(0.975);">Save to Disk</div>
<div class="t" style="left:37.17px;top:381.42px;font-size:4.94px;font-weight:normal;color:#8a8a8a;transform:scaleX(0.999);">Object list</div>
<div class="t" style="left:39.47px;top:393.08px;font-size:5.81px;font-weight:normal;color:#666666;transform:scaleX(0.786);">CC01103PRO_Electric motor</div>
<div class="t" style="left:25.96px;top:404.54px;font-size:4.80px;font-weight:normal;color:#777777;transform:scaleX(0.996);">26.4 x 25.4 x 38.2 mm</div>
<div class="t" style="left:793.35px;top:104.85px;font-size:5.38px;font-weight:normal;color:#333333;transform:scaleX(1.090);">19</div>
</body></html>
